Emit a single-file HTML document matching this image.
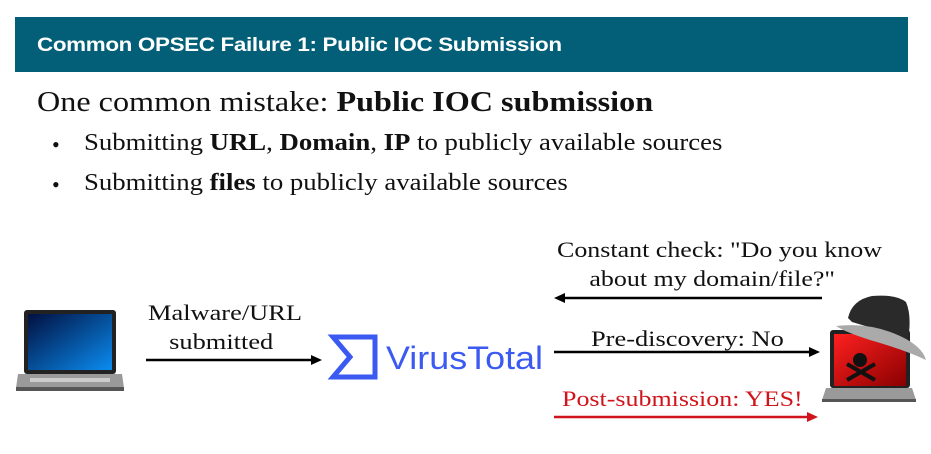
<!DOCTYPE html>
<html><head><style>
body{margin:0;width:931px;height:454px;background:#fff;position:relative;overflow:hidden;font-family:"Liberation Serif",serif;color:#111}
.hdr{position:absolute;left:15px;top:17px;width:893px;height:55px;background:#035f78}
.hdr span{position:absolute;left:22px;top:18px;color:#fff;font:bold 19px "Liberation Sans",sans-serif;letter-spacing:-0.3px;transform:scaleX(1.18);transform-origin:left;white-space:nowrap}
.t{position:absolute;white-space:nowrap;transform-origin:left top}
</style></head><body>
<div class="hdr"><span>Common OPSEC Failure 1: Public IOC Submission</span></div>
<div class="t" style="left:37px;top:86px;font-size:29px;transform:scaleX(1.11)">One common mistake: <b>Public IOC submission</b></div>
<div class="t" style="left:52px;top:132px;font-size:22px">•</div>
<div class="t" style="left:84px;top:130px;font-size:24px;transform:scaleX(1.115)">Submitting <b>URL</b>, <b>Domain</b>, <b>IP</b> to publicly available sources</div>
<div class="t" style="left:52px;top:172px;font-size:22px">•</div>
<div class="t" style="left:84px;top:170px;font-size:24px;transform:scaleX(1.115)">Submitting <b>files</b> to publicly available sources</div>

<div class="t" style="left:148px;top:298px;font-size:22px;text-align:center;line-height:29px;width:122px;transform:scaleX(1.2)">Malware/URL<br>submitted</div>
<div class="t" style="left:557px;top:235px;font-size:22px;text-align:center;line-height:29px;width:263px;transform:scaleX(1.18)">Constant check: "Do you know<br>about my domain/file?"</div>
<div class="t" style="left:591px;top:326px;font-size:22px;transform:scaleX(1.2)">Pre-discovery: No</div>
<div class="t" style="left:562px;top:386px;font-size:22px;color:#d0141c;transform:scaleX(1.18)">Post-submission: YES!</div>

<svg width="931" height="454" style="position:absolute;left:0;top:0">
<line x1="146" y1="360" x2="314" y2="360" stroke="#000" stroke-width="2.5"/>
<polygon points="322,360 311,355 311,365" fill="#000"/>
<line x1="562" y1="298" x2="822" y2="298" stroke="#000" stroke-width="2.5"/>
<polygon points="554,298 565,293 565,303" fill="#000"/>
<line x1="554" y1="352" x2="812" y2="352" stroke="#000" stroke-width="2.5"/>
<polygon points="820,352 809,347 809,357" fill="#000"/>
<line x1="554" y1="417" x2="810" y2="417" stroke="#d0141c" stroke-width="2.5"/>
<polygon points="818,417 807,412 807,422" fill="#d0141c"/>
<defs><linearGradient id="sc" x1="0" y1="0" x2="1" y2="1"><stop offset="0" stop-color="#021040"/><stop offset="1" stop-color="#0a8cf0"/></linearGradient>
<linearGradient id="rd" x1="0" y1="0" x2="1" y2="1"><stop offset="0" stop-color="#ff2020"/><stop offset="1" stop-color="#8a0000"/></linearGradient></defs>
<rect x="24" y="310" width="92" height="64" rx="3" fill="#222"/>
<rect x="28" y="314" width="84" height="56" fill="url(#sc)"/>
<polygon points="18,374 122,374 124,388 16,388" fill="#9a9a9a"/>
<rect x="30" y="378" width="80" height="4" fill="#ccc"/>
<rect x="16" y="387" width="108" height="4" fill="#555"/>
<polygon points="333,337 375,337 375,377 333,377 350,357" fill="none" stroke="#3b5af2" stroke-width="5"/>
<text x="386" y="369" font-family="Liberation Sans,sans-serif" font-size="32" fill="#3b5af2" textLength="157" lengthAdjust="spacingAndGlyphs">VirusTotal</text>
<rect x="830" y="330" width="80" height="58" rx="3" fill="#222"/>
<rect x="834" y="334" width="72" height="52" fill="url(#rd)"/>
<circle cx="860" cy="360" r="7" fill="#111"/>
<path d="M847 364 L875 380 M875 364 L847 380" stroke="#111" stroke-width="4"/>
<polygon points="826,388 912,388 916,400 822,400" fill="#9a9a9a"/>
<rect x="822" y="399" width="94" height="3" fill="#555"/>
<path d="M848 318 Q852 300 872 296 Q896 294 906 302 Q912 316 908 340 Q880 330 852 322 Z" fill="#2a2a2a"/>
<path d="M836 326 Q870 322 900 336 Q922 346 926 360 Q905 350 870 340 Q845 332 836 326 Z" fill="#aaa"/>
</svg>
</body></html>
